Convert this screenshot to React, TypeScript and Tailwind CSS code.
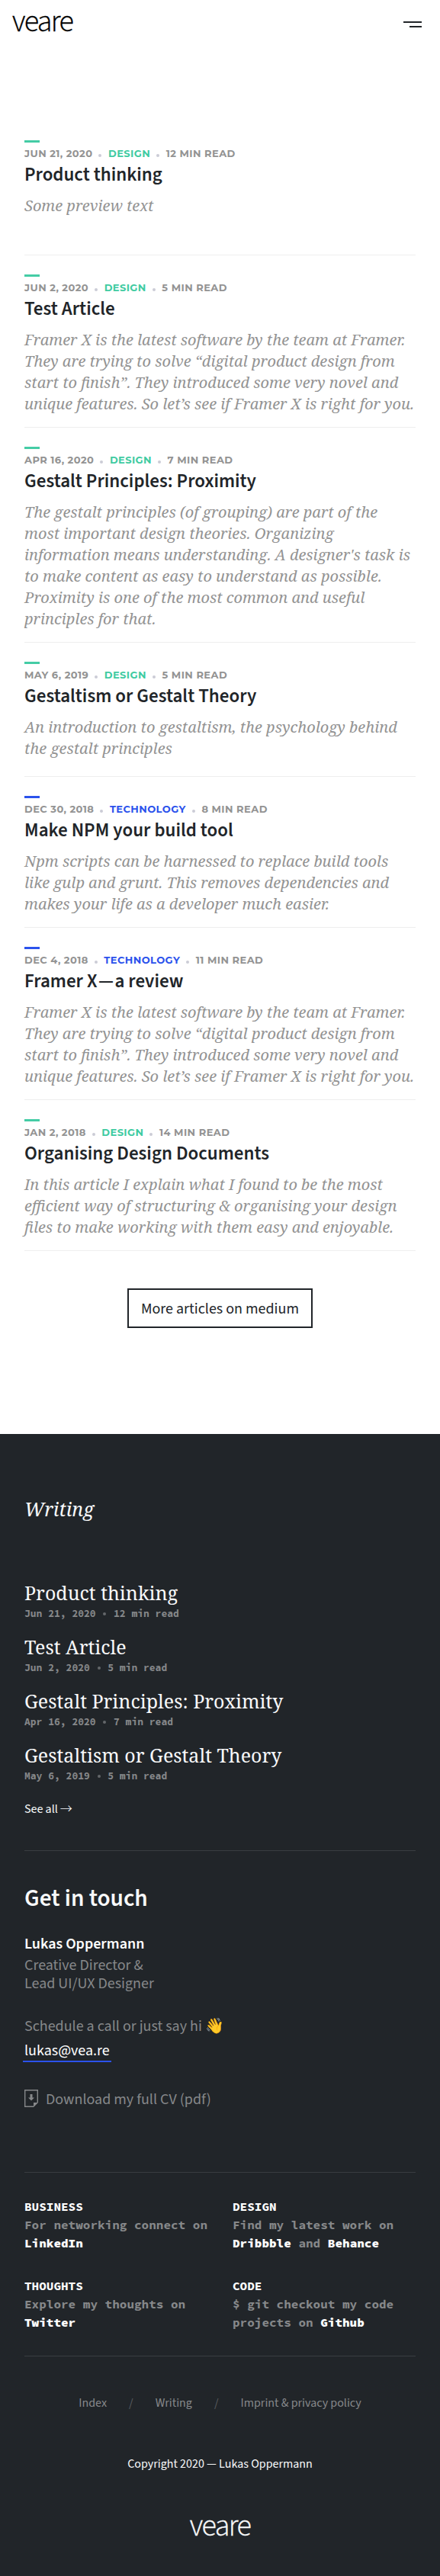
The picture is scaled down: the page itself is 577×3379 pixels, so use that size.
import React from 'react';

type Article = { date: string; topic: 'Design' | 'Technology'; read: string; title: React.ReactNode; preview: string };

const articles: Article[] = [
  { date: 'Jun 21, 2020', topic: 'Design', read: '12 min read', title: 'Product thinking', preview: 'Some preview text' },
  { date: 'Jun 2, 2020', topic: 'Design', read: '5 min read', title: 'Test Article', preview: 'Framer X is the latest software by the team at Framer. They are trying to solve “digital product design from start to finish”. They introduced some very novel and unique features. So let’s see if Framer X is right for you.' },
  { date: 'Apr 16, 2020', topic: 'Design', read: '7 min read', title: 'Gestalt Principles: Proximity', preview: "The gestalt principles (of grouping) are part of the most important design theories. Organizing information means understanding. A designer's task is to make content as easy to understand as possible. Proximity is one of the most common and useful principles for that." },
  { date: 'May 6, 2019', topic: 'Design', read: '5 min read', title: 'Gestaltism or Gestalt Theory', preview: 'An introduction to gestaltism, the psychology behind the gestalt principles' },
  { date: 'Dec 30, 2018', topic: 'Technology', read: '8 min read', title: 'Make NPM your build tool', preview: 'Npm scripts can be harnessed to replace build tools like gulp and grunt. This removes dependencies and makes your life as a developer much easier.' },
  { date: 'Dec 4, 2018', topic: 'Technology', read: '11 min read', title: <>Framer X<span className="mx-[1.5px]">—</span>a review</>, preview: 'Framer X is the latest software by the team at Framer. They are trying to solve “digital product design from start to finish”. They introduced some very novel and unique features. So let’s see if Framer X is right for you.' },
  { date: 'Jan 2, 2018', topic: 'Design', read: '14 min read', title: 'Organising Design Documents', preview: 'In this article I explain what I found to be the most efficient way of structuring & organising your design files to make working with them easy and enjoyable.' },
];

const SERIF = "font-['Noto_Serif','Liberation_Serif',serif]";
const MONO = "font-['Source_Code_Pro','Liberation_Mono',monospace] font-bold";

function Logo() {
  return <span className="block text-[40px] leading-[57px] font-light tracking-[-1.6px] [-webkit-text-stroke:0.4px_currentColor]">veare</span>;
}

function Dot() {
  return <span className="mt-1.5 mr-[8.6px] ml-2 h-1 w-1 rounded-full bg-[#cbccd6]" />;
}

function ArticleCard({ a }: { a: Article }) {
  const green = a.topic === 'Design';
  return (
    <article className="mb-[25px] min-h-[151px] border-b border-[#eeeeee] pb-4">
      <div className={green ? 'h-[3px] w-5 bg-[#44cca5]' : 'h-[3px] w-5 bg-[#2b52ec]'} />
      <div className="mt-1.5 flex h-4 items-center font-['Montserrat','Inter',sans-serif] text-[13px] leading-4 font-bold tracking-[0.43px] text-[#939393] uppercase">
        <span>{a.date}</span>
        <Dot />
        <span className={green ? 'text-[#3fcba2]' : 'text-[#2b52ec]'}>{a.topic}</span>
        <Dot />
        <span>{a.read}</span>
      </div>
      <h2 className="mt-0.5 text-[25px] leading-9 font-semibold text-[#212529]">{a.title}</h2>
      <p className={`mt-[9px] text-xl leading-7 text-[#939393] italic ${SERIF}`}>{a.preview}</p>
    </article>
  );
}

const profiles = [
  { head: 'BUSINESS', body: <>For networking connect on <b className="text-white">LinkedIn</b></> },
  { head: 'DESIGN', body: <>Find my latest work on <b className="text-white">Dribbble</b> and <b className="text-white">Behance</b></> },
  { head: 'THOUGHTS', body: <>Explore my thoughts on <b className="text-white">Twitter</b></> },
  { head: 'CODE', body: <>$ git checkout my code projects on <b className="text-white">Github</b></> },
];

function DownloadIcon() {
  return (
    <svg width="18" height="23" viewBox="0 0 18 23" className="mt-px mr-2.5">
      <path d="M17.3 17V.7H.7v21.6H12" fill="none" stroke="currentColor" strokeWidth="1.4" />
      <path d="M12 17h6l-6 6zM7.5 6h3v4.5H13L9 14.5 5 10.5h2.5z" fill="currentColor" />
    </svg>
  );
}

export default function App() {
  return (
    <div className="min-h-[3379px] bg-white font-['Source_Sans_3','Noto_Sans_CJK_SC',sans-serif] text-[#212529]">
      <header className="flex h-[184px] items-start justify-between pr-6 pl-4">
        <div className="text-black"><Logo /></div>
        <button aria-label="Menu" className="mt-7 flex w-6 flex-col items-end gap-1">
          <span className="h-0.5 w-6 bg-[#212529]" />
          <span className="h-0.5 w-4 bg-[#212529]" />
        </button>
      </header>

      <main className="px-8">
        {articles.map((a) => <ArticleCard key={a.date} a={a} />)}
        <div className="flex h-[215px] items-start justify-center pt-6">
          <a className="block border-2 border-[#212529] px-4 pt-[11px] pb-[9px] text-xl leading-7">More articles on medium</a>
        </div>
      </main>

      <footer className="h-[1498px] bg-[#212529] px-8 pt-[81px] text-[#f8f9fa]">
        <h3 className={`text-[25px] leading-[34px] italic ${SERIF}`}>Writing</h3>
        <ul className="mt-[76px] flex flex-col gap-[18px]">
          {articles.slice(0, 4).map((a) => (
            <li key={a.date}>
              <div className={`text-[25px] leading-[34px] ${SERIF}`}>{a.title}</div>
              <div className={`mt-0.5 flex h-[17px] items-center text-[13px] leading-[17px] text-[#86888a] ${MONO}`}>
                <span>{a.date}</span>
                <span className="mx-[9.7px] mt-px h-1 w-1 rounded-full bg-[#64676a]" />
                <span>{a.read}</span>
              </div>
            </li>
          ))}
        </ul>
        <a className="mt-6 flex h-[22px] items-baseline gap-[3px] text-base leading-[22px]">
          <span>See all</span>
          <span className="font-['Noto_Sans_CJK_SC'] leading-[18px] font-light">→</span>
        </a>

        <hr className="mt-[43px] border-[#393d41]" />
        <h3 className="mt-[41px] text-[31.25px] leading-[44px] font-semibold">Get in touch</h3>
        <div className="mt-[23px] text-xl leading-7 font-semibold text-white">Lukas Oppermann</div>
        <div className="mt-0.5 text-xl leading-6 text-[#86888a]">
          <p>Creative Director &amp;</p>
          <p>Lead UI/UX Designer</p>
        </div>
        <div className="mt-[30px] h-7 text-xl leading-7 text-[#86888a]">Schedule a call or just say hi 👋</div>
        <div className="mt-[5px] flex">
          <a className="-ml-0.5 border-b-2 border-[#2b52ec] px-0.5 text-xl leading-[26px] text-white">lukas@vea.re</a>
        </div>
        <a className="mt-[35px] flex h-7 items-start text-xl leading-7 text-[#86888a]">
          <DownloadIcon />
          <span>Download my full CV (pdf)</span>
        </a>

        <hr className="mt-[81px] border-[#393d41]" />
        <div className={`mt-8 grid grid-cols-[241px_217px] gap-8 text-base leading-6 ${MONO}`}>
          {profiles.map((p) => (
            <div key={p.head}>
              <h4 className="text-white">{p.head}</h4>
              <p className="text-[#86888a]">{p.body}</p>
            </div>
          ))}
        </div>

        <hr className="mt-8 border-[#393d41]" />
        <nav className="mt-[50px] flex justify-center gap-[29px] text-base leading-[22px] text-[#86888a]">
          <a>Index</a>
          <span className="text-[#5a5d60]">/</span>
          <a>Writing</a>
          <span className="text-[#5a5d60]">/</span>
          <a>Imprint &amp; privacy policy</a>
        </nav>
        <p className="mt-[58px] text-center text-base leading-[22px]">Copyright 2020 — Lukas Oppermann</p>
        <div className="mt-[42px] flex justify-center"><Logo /></div>
      </footer>
    </div>
  );
}
